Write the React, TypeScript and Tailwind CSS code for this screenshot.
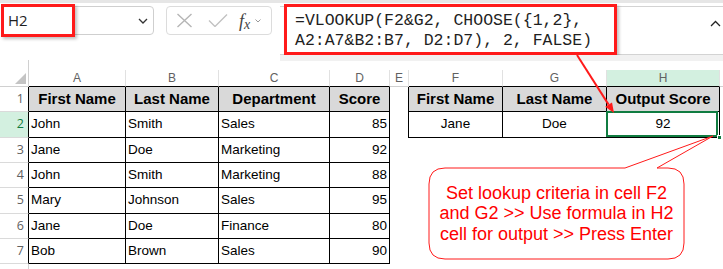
import React from 'react';

const rows = [
  ['John', 'Smith', 'Sales', '85'],
  ['Jane', 'Doe', 'Marketing', '92'],
  ['John', 'Smith', 'Marketing', '88'],
  ['Mary', 'Johnson', 'Sales', '95'],
  ['Jane', 'Doe', 'Finance', '80'],
  ['Bob', 'Brown', 'Sales', '90'],
];

const heights = ['h-[25px]', 'h-[26px]', 'h-[25px]', 'h-[25px]', 'h-[26px]', 'h-[25px]', 'h-[25px]'];

function ColHeaders() {
  const cell = 'flex h-[17px] items-center justify-center border-r border-b border-r-[#e1e1e1] text-[12px] text-[#616161]';
  return (
    <div className="flex">
      <div className="relative h-[17px] w-[29px] border-r border-b border-[#d0d0d0]">
        <svg className="absolute right-[2px] bottom-[2px]" width="11" height="11" viewBox="0 0 11 11">
          <polygon points="0,11 11,11 11,0" fill="#c4c4c4" />
        </svg>
      </div>
      <div className={`${cell} w-[97px] border-b-black`}>A</div>
      <div className={`${cell} w-[93px] border-b-black`}>B</div>
      <div className={`${cell} w-[111px] border-b-black`}>C</div>
      <div className={`${cell} w-[60px] border-b-black`}>D</div>
      <div className={`${cell} w-[19px] border-b-[#d0d0d0]`}>E</div>
      <div className={`${cell} w-[94px] border-b-black`}>F</div>
      <div className={`${cell} w-[104px] border-b-black`}>G</div>
      <div className={`${cell} w-[113px] border-b-black bg-[#d3f0e0] text-[#107c41]`}>H</div>
      <div className="h-[17px] flex-1 border-b border-[#d0d0d0]" />
    </div>
  );
}

export default function App() {
  return (
    <div
      className="relative h-[269px] w-[723px] overflow-hidden bg-white"
      style={{ fontFamily: '"Liberation Sans", Arial, sans-serif' }}
    >
      {/* formula bar */}
      <div className="flex h-[55px] items-start border-t-[3px] border-[#e6e6e6]">
        <div className="relative ml-[1px] mt-[3px] flex h-[29px] w-[153px] items-center justify-between rounded-[4px] border border-[#cfcfcf] pl-[6px] pr-[5px]">
          <span className="text-[15px] text-[#1f1f1f]" style={{ fontFamily: '"Open Sans", sans-serif' }}>H2</span>
          <svg width="10" height="6" viewBox="0 0 10 6" fill="none" stroke="#333" strokeWidth="1.3">
            <path d="M1 1l4 4 4-4" />
          </svg>
          <div className="absolute -left-[1px] -top-[3px] h-[33px] w-[74px] border-[3px] border-[#ff1a1a] shadow-[2px_2px_3px_rgba(0,0,0,0.25)]" />
        </div>
        <div className="ml-[12px] mt-[3px] flex h-[29px] w-[106px] items-center rounded-[4px] border border-[#dcdcdc] pl-[9px]">
          <svg width="17" height="15" viewBox="0 0 17 15" stroke="#b5b5b5" strokeWidth="1.4" fill="none">
            <path d="M1.5 1l14 13M15.5 1l-14 13" />
          </svg>
          <svg className="ml-[15px]" width="20" height="13" viewBox="0 0 20 13" stroke="#c2c2c2" strokeWidth="1.4" fill="none">
            <path d="M1 6.5l6 6 12-12" />
          </svg>
          <span className="ml-[11px] flex items-baseline italic leading-none text-[#444]" style={{ fontFamily: '"Liberation Serif", serif' }}>
            <span className="text-[18px]">f</span>
            <span className="relative top-[2px] text-[14px]">x</span>
          </span>
          <svg className="ml-[5px]" width="6" height="4" viewBox="0 0 6 4" fill="none" stroke="#999" strokeWidth="1">
            <path d="M0.5 0.5l2.5 2.5 2.5-2.5" />
          </svg>
        </div>
        <div className="ml-[8px] mt-[3px] flex h-[49px] flex-1 items-start justify-between border-y border-[#d3d3d3]">
          <div
            className="-mt-[3px] ml-[4px] h-[51px] w-[333px] border-[3px] border-[#ff1a1a] bg-white pl-[8px] pt-[4px] text-[16.5px] leading-[20px] text-[#1f1f1f] shadow-[2px_2px_3px_rgba(0,0,0,0.25)]"
            style={{ fontFamily: '"Liberation Mono", monospace' }}
          >
            <div>=VLOOKUP(F2&amp;G2, CHOOSE({'{'}1,2{'}'},</div>
            <div>A2:A7&amp;B2:B7, D2:D7), 2, FALSE)</div>
          </div>
          <svg className="mr-[2px] mt-[13px]" width="11" height="7" viewBox="0 0 11 7" fill="none" stroke="#222" strokeWidth="1.3">
            <path d="M1 6l4.5-4.5L10 6" />
          </svg>
        </div>
      </div>

      {/* gap above column headers */}
      <div className="flex h-[15px]">
        <div className="w-[280px]" />
        <div className="h-[6px] flex-1 bg-[#f1f1f1]" />
      </div>
      <div className="-mt-[10px] h-[10px] w-[29px] border-r border-[#d0d0d0]" />

      <ColHeaders />

      {/* rows */}
      {[0, 1, 2, 3, 4, 5, 6].map((i) => {
        const n = i + 1;
        const h = heights[i];
        const head = n === 1;
        const data = head ? ['First Name', 'Last Name', 'Department', 'Score'] : rows[i - 1];
        const tcell = `flex ${h} items-center border-r border-b border-black ${
          head ? 'justify-center bg-[#d9d9d9] text-[15px] font-bold text-black' : 'px-[2px] text-[13.5px] text-black'
        }`;
        const inRight = n <= 2;
        const rcell = inRight
          ? `flex ${h} items-center justify-center border-r border-b border-black ${
              head ? 'bg-[#d9d9d9] text-[15px] font-bold text-black' : 'text-[13.5px] text-black'
            }`
          : `${h}`;
        return (
          <div key={n} className="flex">
            <div
              className={`flex ${h} w-[29px] items-center justify-end border-r border-b border-r-black border-b-[#dadada] pr-[4px] text-[12.5px] ${
                n === 2 ? 'bg-[#d3f0e0] text-[#107c41]' : 'text-[#616161]'
              }`}
              style={{ fontFamily: '"Open Sans", sans-serif' }}
            >
              {n}
            </div>
            <div className={`${tcell} w-[97px]`}>{data[0]}</div>
            <div className={`${tcell} w-[93px]`}>{data[1]}</div>
            <div className={`${tcell} w-[111px]`}>{data[2]}</div>
            <div className={`${tcell} w-[60px] ${head ? '' : 'justify-end'}`}>{data[3]}</div>
            <div className={`${h} w-[19px] ${inRight ? 'border-r border-black' : ''}`} />
            <div className={`${rcell} w-[94px]`}>{head ? 'First Name' : inRight ? 'Jane' : ''}</div>
            <div className={`${rcell} w-[104px]`}>{head ? 'Last Name' : inRight ? 'Doe' : ''}</div>
            <div className={`${rcell} relative w-[113px]`}>
              {head ? 'Output Score' : inRight ? '92' : ''}
              {n === 2 && (
                <>
                  <div className="absolute -left-[1px] -top-[1px] h-[26px] w-[112px] border-2 border-[#107c41]" />
                  <div className="absolute -right-[3px] -bottom-[3px] h-[5px] w-[5px] border border-white bg-[#107c41]" />
                </>
              )}
            </div>
          </div>
        );
      })}
      <div className="h-[5px] w-[29px] border-r border-[#d0d0d0]" />

      {/* annotations */}
      <svg className="pointer-events-none absolute left-0 top-0" width="723" height="269" viewBox="0 0 723 269">
        <line x1="577" y1="55" x2="608.6" y2="104.6" stroke="#ff1a1a" strokeWidth="2" />
        <polygon points="614,113 605.2,106.8 612,102.4" fill="#ff1a1a" />
        <path
          d="M445 168 L625 168 L713 136 L657 168 L668 168 Q684 168 684 184 L684 243 Q684 259 668 259 L445 259 Q429 259 429 243 L429 184 Q429 168 445 168 Z"
          fill="white"
          stroke="#ff1a1a"
          strokeWidth="1"
        />
      </svg>
      <div className="absolute left-[429px] top-[168px] flex h-[91px] w-[255px] flex-col items-center justify-center text-[18px] leading-[20.5px] text-[#ff0000]">
        <div>Set lookup criteria in cell F2</div>
        <div>and G2 &gt;&gt; Use formula in H2</div>
        <div>cell for output &gt;&gt; Press Enter</div>
      </div>
    </div>
  );
}
